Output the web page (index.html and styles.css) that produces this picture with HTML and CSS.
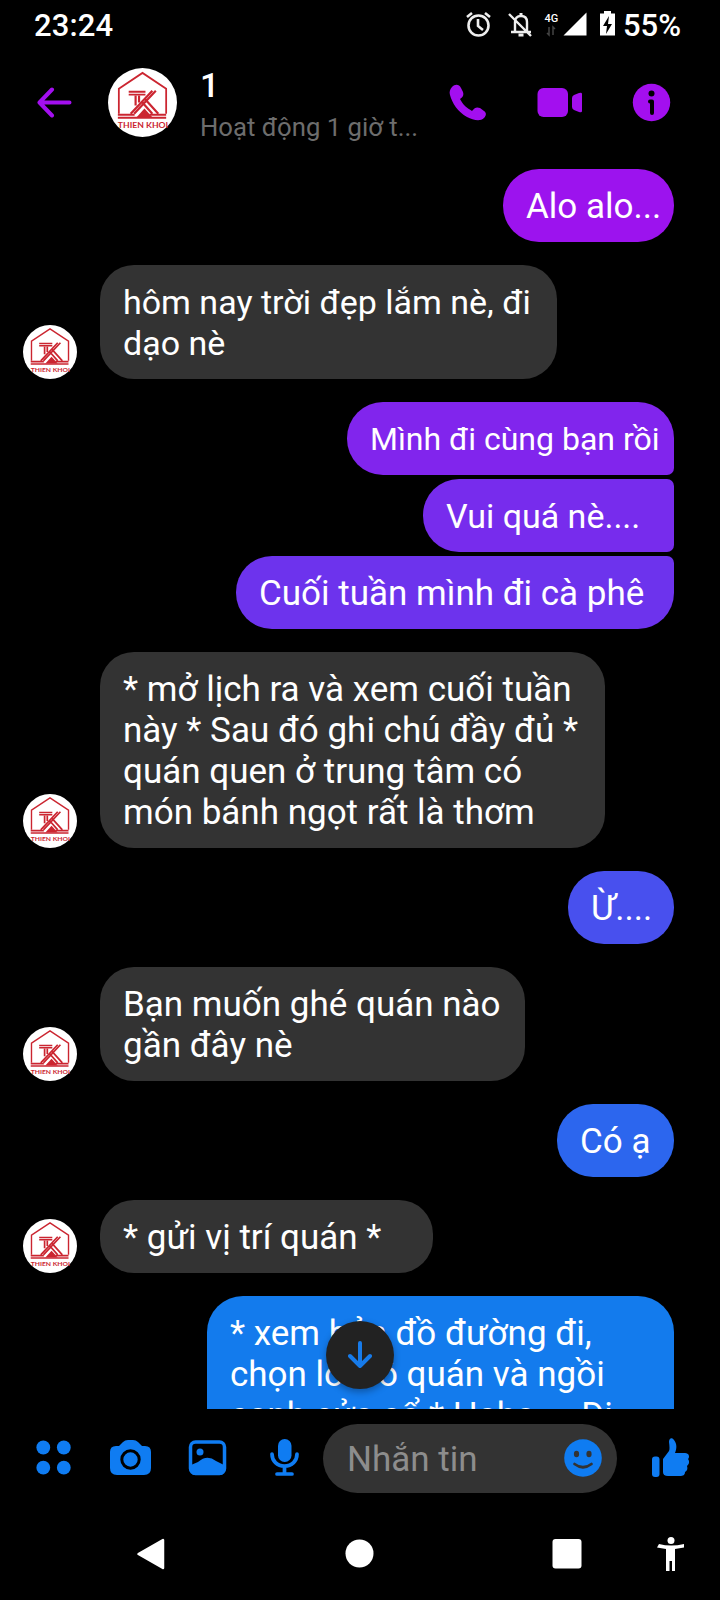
FILE: index.html
```html
<!DOCTYPE html>
<html lang="vi">
<head>
<meta charset="utf-8">
<title>Nhắn tin</title>
<link rel="stylesheet" href="styles.css">
</head>
<body>
<svg class="defs" width="0" height="0" aria-hidden="true">
  <symbol id="logo" viewBox="0 0 70 70">
    <circle cx="35" cy="35" r="35" fill="#fff"/>
    <g fill="none" stroke="#cb2530">
      <path d="M11 46.500V21L35 5l24 16v25.500" stroke-width="1.800"/>
      <path d="M10 47.500h17M42 47.500h17" stroke-width="2"/>
      <path d="M10 50.500h49" stroke-width="2"/>
      <path d="M21 24h17M21 27h17" stroke-width="2"/>
      <path d="M28 28v10M31.500 28v7" stroke-width="2.200"/>
      <path d="M45 23L23 46.500M48.500 23L26.500 46.500M34 34l11 12.500M37 31l14 15.500" stroke-width="2.200"/>
    </g>
    <path d="M29 50l8-9 8 9z" fill="#cb2530"/>
    <text x="10" y="60.500" textLength="51" lengthAdjust="spacingAndGlyphs" class="logo-text">THIEN KHOI</text>
  </symbol>
</svg>
<div class="screen">
  <div class="status">
    <span class="clock">23:24</span>
    <svg class="status-icons" width="155" height="50" viewBox="460 0 155 50">
      <g fill="none" stroke="#eee" stroke-width="2.600">
        <circle cx="478.500" cy="25.500" r="10"/>
        <path d="M478 19v7l5 4M467 17l5-4M490 17l-5-4"/>
        <path d="M515 32V22c0-4 2-6 6-6s6 2 6 6v10M511 32h20M509 14l22 22" stroke-width="2.400"/>
        <path d="M521 13v3M518.500 35h5" stroke-width="3"/>
      </g>
      <text x="544.500" y="22" class="network">4G</text>
      <path d="M549 27v8l-2-2M553 35v-8l2 2" fill="none" stroke="#444" stroke-width="1.500"/>
      <path d="M563.500 35.500L586.500 12.500v23z" fill="#fff"/>
      <path d="M604 11h7v2.500h4v22h-15v-22h4z" fill="#fff"/>
      <path d="M609 16l-6 10h4l-1 8 6-10h-4z" fill="#000"/>
    </svg>
    <span class="percent">55%</span>
  </div>
  <header class="header">
    <svg class="back" width="36" height="32" viewBox="36 87 36 32"><path d="M69.500 103.500H40M52 90.500L39.500 103.500 52 116.500" fill="none" stroke="#a30fef" stroke-width="4" stroke-linecap="round" stroke-linejoin="round"/></svg>
    <svg class="avatar-large"><use href="#logo"/></svg>
    <div class="who"><div class="name">1</div><div class="active">Hoạt động 1 giờ t...</div></div>
    <svg class="calls" width="224" height="44" viewBox="448 80 224 44" fill="#a30fef">
      <path d="M452 87c3-3 7-3 9 1l2 4c1 3 0 5-3 7 3 6 7 9 12 12 3-4 5-4 8-3l4 3c3 2 2 5 0 7-4 4-11 2-17-1-9-5-15-14-17-22-1-3 0-6 2-8z"/>
      <rect x="537.500" y="88" width="30.500" height="29" rx="6"/>
      <path d="M572 98q0-2 2-3l5-2q3-1 3 1v17q0 2-3 1l-5-2q-2-1-2-3z"/>
      <circle cx="651.500" cy="102.500" r="18.700"/>
      <circle cx="651.500" cy="93.500" r="3" fill="#000"/>
      <path d="M650 101.500h2v11.500" fill="none" stroke="#000" stroke-width="4" stroke-linejoin="round" stroke-linecap="round"/>
    </svg>
  </header>
  <main class="messages">
    <div class="group sent"><div class="bubble hi">Alo alo...</div></div>
    <div class="group received"><svg class="avatar"><use href="#logo"/></svg><div class="bubble weather">hôm nay trời đẹp lắm nè, đi<br>dạo nè</div></div>
    <div class="group sent stack">
      <div class="bubble first">Mình đi cùng bạn rồi</div>
      <div class="bubble middle">Vui quá nè....</div>
      <div class="bubble last">Cuối tuần mình đi cà phê</div>
    </div>
    <div class="group received"><svg class="avatar"><use href="#logo"/></svg><div class="bubble long">* mở lịch ra và xem cuối tuần<br>này * Sau đó ghi chú đầy đủ *<br>quán quen ở trung tâm có<br>món bánh ngọt rất là thơm</div></div>
    <div class="group sent"><div class="bubble ok">Ừ....</div></div>
    <div class="group received"><svg class="avatar"><use href="#logo"/></svg><div class="bubble question">Bạn muốn ghé quán nào<br>gần đây nè</div></div>
    <div class="group sent"><div class="bubble yes">Có ạ</div></div>
    <div class="group received"><svg class="avatar"><use href="#logo"/></svg><div class="bubble place">* gửi vị trí quán *</div></div>
    <div class="group sent"><div class="bubble final">* xem bản đồ đường đi,<br>chọn lối vô quán và ngồi<br>cạnh cửa sổ * Haha.... Đi</div></div>
    <button class="jump" aria-label="Xuống cuối"><svg width="24" height="28" viewBox="0 0 24 28"><path d="M12 2v23M2 15l10 10 10-10" fill="none" stroke="#177bea" stroke-width="4" stroke-linecap="round" stroke-linejoin="round"/></svg></button>
  </main>
  <footer class="composer">
    <svg class="tools" width="270" height="44" viewBox="34 1437 270 44" fill="#0f7cf2">
      <circle cx="43.300" cy="1448.500" r="6.900"/><circle cx="63.800" cy="1448.500" r="6.900"/><circle cx="43.300" cy="1468.700" r="6.900"/><circle cx="63.800" cy="1468.700" r="6.900"/>
      <path d="M116 1447h3l4-4q2-2 5-2h5q3 0 5 2l4 4h3q6 0 6 6v16q0 7-7 7h-27q-7 0-7-7v-16q0-6 6-6z"/>
      <circle cx="130.500" cy="1460.500" r="8.700" stroke="#000" stroke-width="3"/>
      <rect x="190.500" y="1443" width="34" height="31.500" rx="5" fill="none" stroke="#0f7cf2" stroke-width="3.500"/>
      <circle cx="200" cy="1453" r="3.500"/><path d="M191 1466l7-3q9-8 18-1l8 4v6q0 4-4 4h-25q-4 0-4-4z"/>
      <rect x="278" y="1440" width="13.500" height="23" rx="6.700"/>
      <path d="M272 1455c0 7 5 12 12.500 12s12.500-5 12.500-12M284.500 1467v7M277 1475h15" fill="none" stroke="#0f7cf2" stroke-width="3.700" stroke-linecap="round"/>
    </svg>
    <div class="field"><span>Nhắn tin</span>
      <svg width="38" height="38" viewBox="0 0 38 38"><circle cx="19" cy="19" r="18.800" fill="#0f7cf2"/><ellipse cx="12.500" cy="15" rx="2.600" ry="3.200" fill="#333"/><ellipse cx="25" cy="15" rx="2.600" ry="3.200" fill="#333"/><path d="M10.500 25q8.500 6.500 17 0" fill="none" stroke="#333" stroke-width="2.700" stroke-linecap="round"/></svg>
    </div>
    <svg class="like" width="40" height="42" viewBox="650 1437 40 42" fill="#0f7cf2"><rect x="652" y="1456.500" width="7.500" height="20.500" rx="3"/><path d="M663 1459l6-8q1-2 0-9c0-4 3-5 5-2 3 4 3 8 1 13h10c4 0 5 4 3 6 2 3 1 5-1 7 1 3 0 5-2 6 0 3-2 4-5 4h-12q-5 0-5-4z"/></svg>
  </footer>
  <nav class="nav">
    <svg width="720" height="91" viewBox="0 1509 720 91" fill="#fff">
      <path d="M133 1553.500Q131 1554 133 1555L152.500 1568V1540z" stroke="none" fill="none"/>
      <path d="M138.500 1554L163 1540v28z" stroke="#fff" stroke-width="2.500" stroke-linejoin="round"/>
      <circle cx="359.500" cy="1553.500" r="14"/><rect x="552.500" y="1539" width="29" height="29.500" rx="3"/>
      <circle cx="671" cy="1540.500" r="3.500"/>
      <path d="M659 1544q12 3 25 0v3.500l-9 1.500v22h-3v-10h-2.500v10H666v-22l-9-1.500z"/>
    </svg>
  </nav>
</div>
</body>
</html>
```
FILE: styles.css
```css
* { box-sizing: border-box; }
body { margin: 0; background: #000; color: #fff; font-family: Roboto, "Noto Sans", sans-serif; }
svg { display: block; flex: none; }
.defs { display: none; }
.screen { width: 720px; height: 1600px; display: flex; flex-direction: column; overflow: hidden; }
.status { height: 50px; flex: none; display: flex; align-items: center; padding: 0 34px; }
.clock { font-size: 31px; font-weight: 500; width: 426px; letter-spacing: .1px; }
.percent { font-size: 31px; font-weight: 500; margin-left: 8px; }
.network { font: 500 11px Roboto, sans-serif; fill: #fff; }
.header { height: 104px; flex: none; display: flex; align-items: center; padding: 0 36px; }
.avatar-large { width: 69px; height: 69px; margin: 1px 1px 0 36px; }
.logo-text { font: 700 8px Lato, sans-serif; fill: #cb2530; }
.who { width: 248px; margin-left: 22px; padding-top: 7px; white-space: nowrap; }
.name { font-size: 34px; font-weight: 500; line-height: 42px; }
.active { font-size: 25.700px; line-height: 42px; color: #6d6d6d; }
.messages { position: relative; height: 1255px; flex: none; padding: 15px 46px 0 23px; overflow: hidden; display: flex; flex-direction: column; gap: 23px; }
.group { display: flex; flex: none; }
.sent { flex-direction: column; align-items: flex-end; gap: 4px; }
.received { align-items: flex-end; gap: 23px; }
.avatar { width: 54px; height: 54px; }
.bubble { padding: 17px 0 15px 23px; border-radius: 36px; font-size: 35px; line-height: 41px; white-space: nowrap; }
.received .bubble { background: #333; border-radius: 34px; }
.hi { width: 171px; background: #9c13ee; }
.weather { width: 457px; font-size: 34px; }
.first { width: 327px; font-size: 32px; background: #8125ed; border-bottom-right-radius: 7px; }
.middle { width: 251px; font-size: 34px; background: #772ced; border-radius: 36px 7px 7px 36px; }
.last { width: 438px; background: #6d33ed; border-top-right-radius: 7px; }
.long { width: 505px; }
.ok { width: 106px; background: #4850ee; }
.question { width: 425px; }
.yes { width: 117px; background: #2c66ee; }
.place { width: 333px; }
.final { width: 467px; background: #137bed; }
.jump { position: absolute; left: 326px; top: 1167px; width: 68px; height: 68px; padding: 0; border: 0; border-radius: 50%; background: #222; display: flex; align-items: center; justify-content: center; box-shadow: 0 3px 7px rgba(0, 0, 0, .3); }
.composer { height: 100px; flex: none; display: flex; align-items: center; padding: 0 30px 2px 34px; }
.field { width: 294px; height: 69px; margin-left: 19px; padding: 0 15px 0 24px; border-radius: 35px; background: #333; display: flex; align-items: center; justify-content: space-between; font-size: 35px; color: #8d8d8d; }
.field span { position: relative; top: 1px; }
.like { margin-left: 33px; }
.nav { height: 91px; flex: none; }
```
